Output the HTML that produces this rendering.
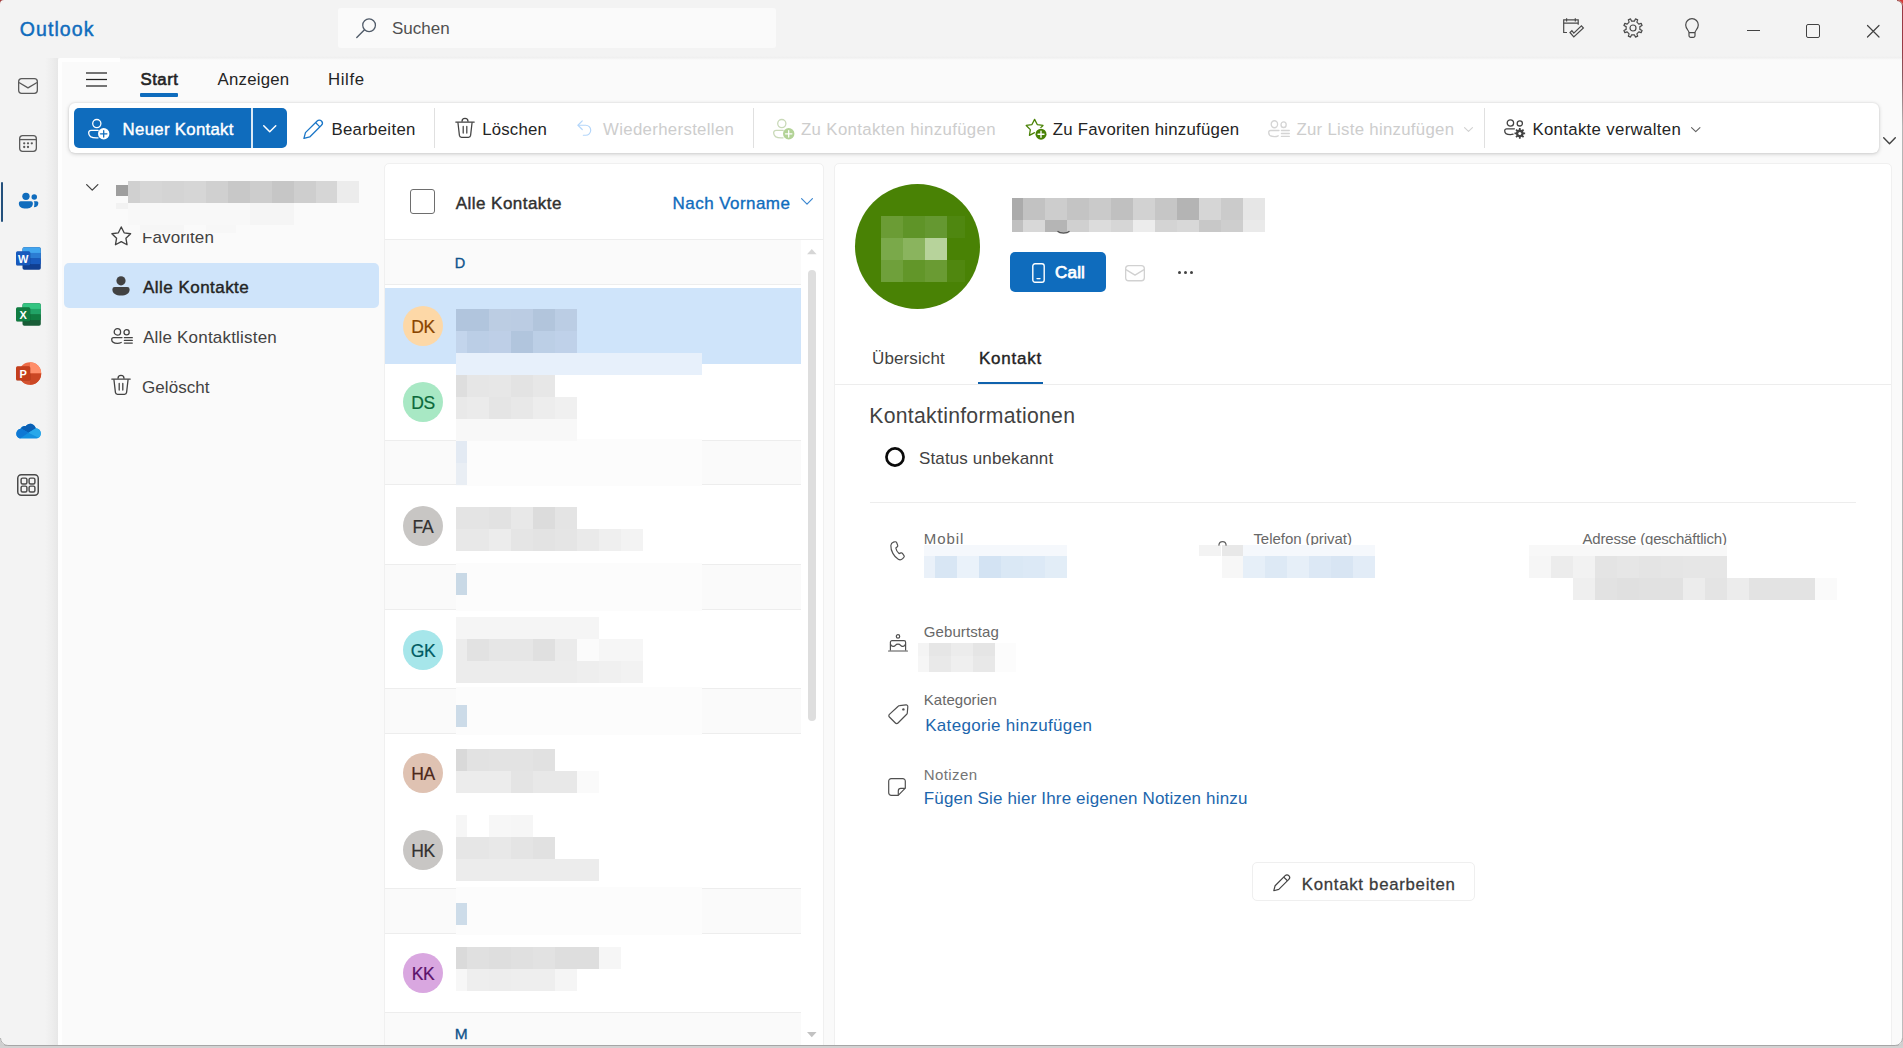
<!DOCTYPE html>
<html lang="de"><head><meta charset="utf-8"><title>Outlook</title>
<style>

*{box-sizing:border-box;margin:0;padding:0}
html,body{width:1903px;height:1048px;overflow:hidden}
body{position:relative;background:#f3f3f3;font-family:"Liberation Sans",sans-serif;color:#242424}
.t{position:absolute;white-space:nowrap;line-height:normal;display:block}
.ic{position:absolute;overflow:visible;display:block}
.m{position:absolute;display:block}
.abs{position:absolute}
#main{position:absolute;left:58px;top:57.5px;width:1845px;height:988px;background:#fafafa;border-top-left-radius:3px;border-left:4px solid #fefefe}
#mshadow{position:absolute;left:45px;top:58px;width:13px;height:987px;background:linear-gradient(to right,#f3f3f3,#eeeeee 50%,#e7e7e7)}
#search{position:absolute;left:338px;top:8px;width:438px;height:39.6px;background:#fafafa;border-radius:3px}
#ribbon{position:absolute;left:69px;top:103px;width:1810px;height:50px;background:#fff;border-radius:6px;box-shadow:0 1px 4px rgba(0,0,0,.18),0 0 2px rgba(0,0,0,.10)}
#newbtn{position:absolute;left:74px;top:108px;width:213px;height:40px;background:#0f6cbd;border-radius:5px}
#newbtn i{position:absolute;left:177px;top:0;width:1.5px;height:40px;background:#fff;opacity:.85}
.sep{position:absolute;top:108px;width:1px;height:40px;background:#e0e0e0}
#navsel{position:absolute;left:64px;top:263px;width:315px;height:45px;background:#cfe4fa;border-radius:5px}
#list{position:absolute;left:384px;top:163px;width:440px;height:890px;background:#fff;border:1px solid #f0f0f0;border-radius:5px 5px 0 0;overflow:hidden}
#detail{position:absolute;left:834px;top:163px;width:1058px;height:890px;background:#fff;border:1px solid #f0f0f0;border-radius:5px 5px 0 0}
.hd{position:absolute;left:385px;width:416px;background:#fafafa;border-top:1px solid #ededed;border-bottom:1px solid #ededed}
.av{position:absolute;width:40px;height:40px;border-radius:50%;text-align:center;font-size:17.5px;line-height:42px;letter-spacing:-0.3px;-webkit-text-stroke:0.2px currentColor}
#selrow{position:absolute;left:385px;top:288px;width:416px;height:76px;background:#cfe4fa}
#winb{position:absolute;left:0;top:1044.6px;width:1903px;height:3.4px;background:#d2d2d2;border-top:1.2px solid #a6a6a6;z-index:50}

</style></head>
<body>
<div id="mshadow"></div>
<div id="main"></div>
<i class="m" style="left:58px;top:57.5px;width:62px;height:4.5px;background:#fefefe;border-top-left-radius:3px"></i>
<i class="m" style="left:120px;top:55.5px;width:1783px;height:4px;background:linear-gradient(#f3f3f3,#efefef 45%,#f7f7f7 75%,#fafafa)"></i>
<div id="winb"></div>
<i class="m" style="left:1902px;top:6px;width:1px;height:1036px;background:linear-gradient(#9a3a44 0,#9a3a44 40px,#8a5a60 70px,#b5b5b5 120px,#bdbdbd 100%)"></i>
<svg class="ic" style="left:1897px;top:0px" width="6" height="6" viewBox="0 0 6 6" ><path d="M0 0 H6 V6 A6 6 0 0 0 0 0 Z" fill="#d63a36"/><path d="M0 0.5 A5.5 5.5 0 0 1 5.5 6" fill="none" stroke="#9a4a48" stroke-width="1"/></svg>
<svg class="ic" style="left:1895px;top:1038px;z-index:60" width="8" height="8" viewBox="0 0 8 8" ><path d="M8 0 V8 H0 A8 8 0 0 0 8 0 Z" fill="#cfcfcf"/><path d="M7.5 0 A7.5 7.5 0 0 1 0 7.5" fill="none" stroke="#b0b0b0" stroke-width="1"/></svg>
<svg class="ic" style="left:0px;top:1038px;z-index:60" width="8" height="8" viewBox="0 0 8 8" ><path d="M0 0 V8 H8 A8 8 0 0 1 0 0 Z" fill="#cfcfcf"/><path d="M0.5 0 A7.5 7.5 0 0 0 8 7.5" fill="none" stroke="#b0b0b0" stroke-width="1"/></svg>
<svg class="ic" style="left:0px;top:0px" width="4" height="4" viewBox="0 0 4 4" ><path d="M0 0 H4 A4 4 0 0 0 0 4 Z" fill="#a33a3a"/></svg>
<i class="m" style="left:1px;top:182px;width:2px;height:40px;background:#23507c;border-radius:1px"></i>
<div id="search"></div>
<svg class="ic" style="left:355.8px;top:17.8px" width="20.5" height="20.5" viewBox="0 0 21 21" ><circle cx="13.4" cy="7.4" r="6.5" fill="none" stroke="#4f5a68" stroke-width="1.3"/><path d="M8.7 12.1 L0.8 20" stroke="#4f5a68" stroke-width="1.4" stroke-linecap="round"/></svg>
<svg class="ic" style="left:1562.5px;top:18px" width="21" height="20" viewBox="0 0 21 20" ><path d="M4 14.5 H0.7 V1.9 H15.2 V6.8" fill="none" stroke="#4a4a4a" stroke-width="1.2" stroke-linejoin="miter"/><path d="M0.7 5.1 H15.2 M3.6 0.2 V3.4 M12.3 0.2 V3.4" stroke="#4a4a4a" stroke-width="1.2"/><path d="M7 14.5 L10.8 19 L20.4 10 L18.4 7.8 L10.8 15.2 L8.9 12.7 Z" fill="none" stroke="#4a4a4a" stroke-width="1.2" stroke-linejoin="miter"/></svg>
<svg class="ic" style="left:1623px;top:18px" width="20" height="20" viewBox="0 0 20 20" ><path d="M19.08 12.44 L18.14 14.69 L15.83 13.87 L13.87 15.83 L14.69 18.14 L12.44 19.08 L11.39 16.86 L8.61 16.86 L7.56 19.08 L5.31 18.14 L6.13 15.83 L4.17 13.87 L1.86 14.69 L0.92 12.44 L3.14 11.39 L3.14 8.61 L0.92 7.56 L1.86 5.31 L4.17 6.13 L6.13 4.17 L5.31 1.86 L7.56 0.92 L8.61 3.14 L11.39 3.14 L12.44 0.92 L14.69 1.86 L13.87 4.17 L15.83 6.13 L18.14 5.31 L19.08 7.56 L16.86 8.61 L16.86 11.39 Z" fill="none" stroke="#4a4a4a" stroke-width="1.2" stroke-linejoin="round"/><circle cx="10" cy="10" r="3" fill="none" stroke="#4a4a4a" stroke-width="1.2"/></svg>
<svg class="ic" style="left:1685.4px;top:18px" width="14" height="20" viewBox="0 0 14 20" ><path d="M4 14.6 C4 12.6 0.7 10.8 0.7 7 A6.3 6.3 0 0 1 13.3 7 C13.3 10.8 10 12.6 10 14.6 Z" fill="none" stroke="#4a4a4a" stroke-width="1.2" stroke-linejoin="round"/><path d="M4 14.8 V17.6 A1.8 1.8 0 0 0 5.8 19.4 H8.2 A1.8 1.8 0 0 0 10 17.6 V14.8" fill="none" stroke="#4a4a4a" stroke-width="1.2"/></svg>
<i class="m" style="left:1746.5px;top:30px;width:13.5px;height:1.3px;background:#424242"></i>
<i class="m" style="left:1806px;top:24px;width:14px;height:14px;border:1.3px solid #424242;border-radius:2px"></i>
<svg class="ic" style="left:1866.5px;top:25px" width="12.5" height="12.5" viewBox="0 0 12.5 12.5" ><path d="M0.5 0.5 L12 12 M12 0.5 L0.5 12" stroke="#424242" stroke-width="1.2" stroke-linecap="round"/></svg>
<svg class="ic" style="left:18px;top:78px" width="20" height="16" viewBox="0 0 20 16" ><rect x="0.65" y="0.65" width="18.7" height="14.7" rx="3" fill="none" stroke="#5a5a5a" stroke-width="1.3"/><path d="M0.95 4.48 L10.0 9.92 L19.05 4.48" fill="none" stroke="#5a5a5a" stroke-width="1.3" stroke-linejoin="round"/></svg>
<svg class="ic" style="left:19px;top:135px" width="18" height="17" viewBox="0 0 18 17" ><rect x="0.65" y="0.65" width="16.7" height="15.7" rx="3" fill="none" stroke="#5a5a5a" stroke-width="1.3"/><path d="M0.65 4.59 H17.35" stroke="#5a5a5a" stroke-width="1.3"/><circle cx="5.2" cy="8.3" r="1.15" fill="#5a5a5a"/><circle cx="9" cy="8.3" r="1.15" fill="#5a5a5a"/><circle cx="12.8" cy="8.3" r="1.15" fill="#5a5a5a"/><circle cx="5.2" cy="12" r="1.15" fill="#5a5a5a"/><circle cx="9" cy="12" r="1.15" fill="#5a5a5a"/></svg>
<svg class="ic" style="left:17.5px;top:192.1px" width="21.2" height="17" viewBox="0 0 22 18" ><circle cx="8.2" cy="4.6" r="3.9" fill="#0f6cbd"/><circle cx="17" cy="5.4" r="2.9" fill="#0f6cbd"/><path d="M2.6 9.8 H13.6 A1.9 1.9 0 0 1 15.5 11.7 V12.4 C15.5 15.6 12.4 17.6 8.1 17.6 C3.8 17.6 0.7 15.6 0.7 12.4 V11.7 A1.9 1.9 0 0 1 2.6 9.8 Z" fill="#0f6cbd"/><path d="M16.4 9.8 H19.6 A1.7 1.7 0 0 1 21.3 11.5 V12 C21.3 14.6 19.4 16.2 16.6 16.2 C16.9 15.2 17.1 14 17.1 12.6 V11.7 C17.1 11 16.9 10.3 16.4 9.8 Z" fill="#0f6cbd"/></svg>
<svg class="ic" style="left:16px;top:246.5px" width="25" height="23" viewBox="0 0 25 23" ><rect x="6.5" y="0.3" width="18.3" height="22.4" rx="1.8" fill="#103f91"/><path d="M8.3 0.3 H23 A1.8 1.8 0 0 1 24.8 2.1 V5.9 H6.5 V2.1 A1.8 1.8 0 0 1 8.3 0.3 Z" fill="#41a5ee"/><rect x="6.5" y="5.9" width="18.3" height="5.6" fill="#2b7cd3"/><rect x="6.5" y="11.5" width="18.3" height="5.6" fill="#185abd"/><rect x="0.2" y="4.6" width="14.2" height="14.2" rx="1.5" fill="#000" opacity=".18"/><rect x="0" y="4.3" width="14.2" height="14.2" rx="1.5" fill="#185abd"/><text x="7.1" y="15.5" text-anchor="middle" font-family="Liberation Sans, sans-serif" font-weight="700" font-size="11" fill="#fff">W</text></svg>
<svg class="ic" style="left:16px;top:303px" width="25" height="23" viewBox="0 0 25 23" ><rect x="6.5" y="0.3" width="18.3" height="22.4" rx="1.8" fill="#185c37"/><path d="M8.3 0.3 H23 A1.8 1.8 0 0 1 24.8 2.1 V5.9 H6.5 V2.1 A1.8 1.8 0 0 1 8.3 0.3 Z" fill="#33c481"/><rect x="6.5" y="5.9" width="18.3" height="5.6" fill="#21a366"/><rect x="6.5" y="11.5" width="18.3" height="5.6" fill="#107c41"/><rect x="0.2" y="4.6" width="14.2" height="14.2" rx="1.5" fill="#000" opacity=".18"/><rect x="0" y="4.3" width="14.2" height="14.2" rx="1.5" fill="#107c41"/><text x="7.1" y="15.5" text-anchor="middle" font-family="Liberation Sans, sans-serif" font-weight="700" font-size="11" fill="#fff">X</text></svg>
<svg class="ic" style="left:16px;top:361.5px" width="25" height="23" viewBox="0 0 25 23" ><circle cx="14" cy="11.5" r="11.2" fill="#ed6c47"/><path d="M14 .3 A11.2 11.2 0 0 1 25.2 11.5 H14 Z" fill="#ff8f6b"/><path d="M2.8 11.5 H25.2 A11.2 11.2 0 0 1 2.8 11.5 Z" fill="#d35230"/><path d="M14 11.5 H25.2 A11.2 11.2 0 0 1 14 22.7 Z" fill="#c43e1c" opacity=".55"/><rect x="0.2" y="4.6" width="14.2" height="14.2" rx="1.5" fill="#000" opacity=".18"/><rect x="0" y="4.3" width="14.2" height="14.2" rx="1.5" fill="#c43e1c"/><text x="7.1" y="15.5" text-anchor="middle" font-family="Liberation Sans, sans-serif" font-weight="700" font-size="11" fill="#fff">P</text></svg>
<svg class="ic" style="left:16px;top:422.7px" width="25" height="16" viewBox="0 0 25 16" ><path d="M9.6 3.2 C11.2 1 13.6 0.2 15.8 0.9 C17.9 1.6 19.3 3.2 19.8 5.3 C22.6 5.4 24.8 7.6 24.8 10.4 C24.8 13.3 22.5 15.6 19.6 15.6 H5.4 C2.5 15.6 0.3 13.4 0.3 10.7 C0.3 8.2 2.1 6.2 4.5 5.8 C5 4 7.2 2.6 9.6 3.2 Z" fill="#1490df"/><path d="M9.6 3.2 C11.2 1 13.6 0.2 15.8 0.9 C17.9 1.6 19.3 3.2 19.8 5.3 L12.5 9.8 L5 5.6 C6 3.8 7.6 2.8 9.6 3.2 Z" fill="#0a5fb4"/><path d="M5 5.6 L12.5 9.8 L4 15.4 C1.8 14.9 0.3 13 0.3 10.7 C0.3 8.2 2.1 6.2 4.5 5.8 Z" fill="#0f78d4"/><path d="M12.5 9.8 L19.8 5.3 C22.6 5.4 24.8 7.6 24.8 10.4 C24.8 12.2 23.9 13.8 22.5 14.7 Z" fill="#28a8ea"/></svg>
<svg class="ic" style="left:17.3px;top:473.5px" width="22" height="22" viewBox="0 0 22 22" ><rect x="0.75" y="0.75" width="20.5" height="20.5" rx="3.5" fill="none" stroke="#4a4a4a" stroke-width="1.5"/><rect x="4.1" y="4.1" width="5.8" height="5.8" rx="1.5" fill="none" stroke="#4a4a4a" stroke-width="1.45"/><rect x="12.1" y="4.1" width="5.8" height="5.8" rx="1.5" fill="none" stroke="#4a4a4a" stroke-width="1.45"/><rect x="4.1" y="12.1" width="5.8" height="5.8" rx="1.5" fill="none" stroke="#4a4a4a" stroke-width="1.45"/><rect x="12.1" y="12.1" width="5.8" height="5.8" rx="1.5" fill="none" stroke="#4a4a4a" stroke-width="1.45"/></svg>
<svg class="ic" style="left:86px;top:72.0px" width="21" height="15" viewBox="0 0 21 15" ><path d="M0 1 H21" stroke="#242424" stroke-width="1.25"/><path d="M0 7.5 H21" stroke="#242424" stroke-width="1.25"/><path d="M0 14 H21" stroke="#242424" stroke-width="1.25"/></svg>
<i class="m" style="left:140px;top:93.2px;width:37.9px;height:3.6px;background:#0f6cbd;border-radius:1px"></i>
<div id="ribbon"></div>
<div id="newbtn"><i></i></div>
<svg class="ic" style="left:87.8px;top:118.2px" width="22" height="22" viewBox="0 0 22 22" ><circle cx="8.8" cy="5.6" r="4.1" fill="none" stroke="#fff" stroke-width="1.3"/><path d="M10.2 12.3 H3 A2.3 2.3 0 0 0 0.7 14.6 V15 C0.7 17.9 3.6 19.9 8.3 19.9 C8.9 19.9 9.5 19.87 10 19.8" fill="none" stroke="#fff" stroke-width="1.3" stroke-linecap="round"/><circle cx="15.7" cy="15.8" r="5.7" fill="#fff"/><path d="M15.7 12.6 V19 M12.5 15.8 H18.9" stroke="#0f6cbd" stroke-width="1.3" stroke-linecap="round"/></svg>
<svg class="ic" style="left:262.5px;top:125px" width="13.5" height="7.5" viewBox="0 0 13.5 7.5" ><path d="M0.75 0.75 L6.75 6.75 L12.75 0.75" fill="none" stroke="#fff" stroke-width="1.5" stroke-linecap="round" stroke-linejoin="round"/></svg>
<svg class="ic" style="left:303.4px;top:118.6px" width="20.4" height="20.4" viewBox="0 0 20 20" ><path d="M13.9 1.9 A2.95 2.95 0 0 1 18.1 6.1 L6.6 17.6 L0.9 19.1 L2.4 13.4 Z" fill="none" stroke="#1a76c7" stroke-width="1.25" stroke-linejoin="round"/><path d="M12.3 3.5 L16.5 7.7" stroke="#1a76c7" stroke-width="1.25"/></svg>
<i class="sep" style="left:434px"></i>
<svg class="ic" style="left:455.3px;top:118px" width="20" height="20" viewBox="0 0 20 20" ><path d="M0.8 4.1 H19.2" stroke="#424242" stroke-width="1.25" stroke-linecap="round"/><path d="M7 3.8 V3.4 A3 3 0 0 1 13 3.4 V3.8" fill="none" stroke="#424242" stroke-width="1.25"/><path d="M2.9 4.3 L4.4 17.4 A2.2 2.2 0 0 0 6.6 19.3 H13.4 A2.2 2.2 0 0 0 15.6 17.4 L17.1 4.3" fill="none" stroke="#424242" stroke-width="1.25" stroke-linejoin="round"/><path d="M8.2 8.4 V15 M11.8 8.4 V15" stroke="#424242" stroke-width="1.25" stroke-linecap="round"/></svg>
<svg class="ic" style="left:577.3px;top:119.6px" width="14.5" height="16.2" viewBox="0 0 16 18" ><path d="M5.8 1 L1 5.8 L5.8 10.6" fill="none" stroke="#b4d6fa" stroke-width="1.3" stroke-linecap="round" stroke-linejoin="round"/><path d="M1.4 5.8 H9.6 A5.6 5.6 0 0 1 9.6 17 H7" fill="none" stroke="#b4d6fa" stroke-width="1.3" stroke-linecap="round"/></svg>
<i class="sep" style="left:753px"></i>
<svg class="ic" style="left:772.8px;top:118.2px" width="22" height="22" viewBox="0 0 22 22" ><circle cx="8.8" cy="5.6" r="4.1" fill="none" stroke="#c9d9b8" stroke-width="1.3"/><path d="M10.2 12.3 H3 A2.3 2.3 0 0 0 0.7 14.6 V15 C0.7 17.9 3.6 19.9 8.3 19.9 C8.9 19.9 9.5 19.87 10 19.8" fill="none" stroke="#c9d9b8" stroke-width="1.3" stroke-linecap="round"/><circle cx="15.7" cy="15.8" r="5.7" fill="#b3d397"/><path d="M15.7 12.6 V19 M12.5 15.8 H18.9" stroke="#fff" stroke-width="1.3" stroke-linecap="round"/></svg>
<svg class="ic" style="left:1024.5px;top:118px" width="22" height="22" viewBox="0 0 22 22" ><path d="M9.60 1.40 L12.25 6.56 L17.97 7.48 L13.88 11.59 L14.77 17.32 L9.60 14.70 L4.43 17.32 L5.32 11.59 L1.23 7.48 L6.95 6.56 Z" fill="none" stroke="#498205" stroke-width="1.3" stroke-linejoin="round"/><circle cx="16" cy="16.2" r="6.4" fill="#fff"/><circle cx="16" cy="16.2" r="5.5" fill="#498205"/><path d="M16 13.2 V19.2 M13 16.2 H19" stroke="#fff" stroke-width="1.4" stroke-linecap="round"/></svg>
<svg class="ic" style="left:1267.8px;top:120.4px" width="22" height="17.4" viewBox="0 0 22 16" preserveAspectRatio="none"><circle cx="6.4" cy="3.9" r="3.2" fill="none" stroke="#d4d4d4" stroke-width="1.3"/><circle cx="15.6" cy="4.3" r="2.6" fill="none" stroke="#d4d4d4" stroke-width="1.3"/><path d="M11 9.6 H2.6 A1.9 1.9 0 0 0 0.7 11.5 C0.7 13.8 2.9 15.3 6.4 15.3 C7.9 15.3 9.2 15 10.2 14.5" fill="none" stroke="#d4d4d4" stroke-width="1.3" stroke-linecap="round"/><path d="M13.4 9.7 H21.3 M13.4 12.4 H21.3 M13.4 15.1 H21.3" stroke="#d4d4d4" stroke-width="1.3" stroke-linecap="round"/></svg>
<svg class="ic" style="left:1463.7px;top:126.5px" width="9" height="5" viewBox="0 0 9 5" ><path d="M0.55 0.55 L4.5 4.45 L8.45 0.55" fill="none" stroke="#d1d1d1" stroke-width="1.1" stroke-linecap="round" stroke-linejoin="round"/></svg>
<i class="sep" style="left:1484px"></i>
<svg class="ic" style="left:1504px;top:118.5px" width="22" height="20" viewBox="0 0 22 20" ><circle cx="6.4" cy="4" r="3.2" fill="none" stroke="#424242" stroke-width="1.3"/><circle cx="15.8" cy="4.4" r="2.6" fill="none" stroke="#424242" stroke-width="1.3"/><path d="M10.4 9.8 H2.6 A1.9 1.9 0 0 0 0.7 11.7 C0.7 14 2.9 15.6 6.4 15.6 C7.4 15.6 8.3 15.5 9.1 15.2" fill="none" stroke="#424242" stroke-width="1.3" stroke-linecap="round"/><path d="M21.13 13.54 L21.13 15.26 L19.59 15.30 L19.12 16.45 L20.18 17.56 L18.96 18.78 L17.85 17.72 L16.70 18.19 L16.66 19.73 L14.94 19.73 L14.90 18.19 L13.75 17.72 L12.64 18.78 L11.42 17.56 L12.48 16.45 L12.01 15.30 L10.47 15.26 L10.47 13.54 L12.01 13.50 L12.48 12.35 L11.42 11.24 L12.64 10.02 L13.75 11.08 L14.90 10.61 L14.94 9.07 L16.66 9.07 L16.70 10.61 L17.85 11.08 L18.96 10.02 L20.18 11.24 L19.12 12.35 L19.59 13.50 Z" fill="#424242"/><circle cx="15.8" cy="14.4" r="1.5" fill="#fff"/></svg>
<svg class="ic" style="left:1690.5px;top:126.5px" width="9.5" height="5.2" viewBox="0 0 9.5 5.2" ><path d="M0.55 0.55 L4.75 4.65 L8.95 0.55" fill="none" stroke="#616161" stroke-width="1.1" stroke-linecap="round" stroke-linejoin="round"/></svg>
<svg class="ic" style="left:1882.8px;top:137px" width="13" height="7.5" viewBox="0 0 13 7.5" ><path d="M0.7 0.7 L6.5 6.8 L12.3 0.7" fill="none" stroke="#424242" stroke-width="1.4" stroke-linecap="round" stroke-linejoin="round"/></svg>
<svg class="ic" style="left:85.5px;top:184px" width="12.5" height="6.8" viewBox="0 0 12.5 6.8" ><path d="M0.65 0.65 L6.25 6.1499999999999995 L11.85 0.65" fill="none" stroke="#424242" stroke-width="1.3" stroke-linecap="round" stroke-linejoin="round"/></svg>
<i class="m" style="left:115.8px;top:184.7px;width:12.2px;height:11.0px;background:#9e9e9e;"></i>
<i class="m" style="left:128.0px;top:180.8px;width:11.8px;height:21.8px;background:#d0d0d0;"></i>
<i class="m" style="left:139.5px;top:180.8px;width:22.3px;height:21.8px;background:#d6d6d6;"></i>
<i class="m" style="left:161.5px;top:180.8px;width:22.3px;height:21.8px;background:#d4d4d4;"></i>
<i class="m" style="left:183.5px;top:180.8px;width:22.3px;height:21.8px;background:#d6d6d6;"></i>
<i class="m" style="left:205.5px;top:180.8px;width:22.3px;height:21.8px;background:#d0d0d0;"></i>
<i class="m" style="left:227.5px;top:180.8px;width:22.3px;height:21.8px;background:#c8c8c8;"></i>
<i class="m" style="left:249.5px;top:180.8px;width:22.3px;height:21.8px;background:#cdcdcd;"></i>
<i class="m" style="left:271.5px;top:180.8px;width:22.3px;height:21.8px;background:#c6c6c6;"></i>
<i class="m" style="left:293.5px;top:180.8px;width:22.3px;height:21.8px;background:#cecece;"></i>
<i class="m" style="left:315.5px;top:180.8px;width:21.8px;height:21.8px;background:#d6d6d6;"></i>
<i class="m" style="left:337.0px;top:180.8px;width:21.6px;height:21.8px;background:#ececec;"></i>
<i class="m" style="left:115.8px;top:202.6px;width:12.2px;height:6.0px;background:#f2f2f2;"></i>
<i class="m" style="left:128.0px;top:202.6px;width:162.0px;height:22.0px;background:#f8f8f8;"></i>
<i class="m" style="left:249.5px;top:202.6px;width:44.0px;height:22.0px;background:#f5f5f5;"></i>
<svg class="ic" style="left:111px;top:225.6px" width="20.5" height="20.5" viewBox="0 0 20 20" ><path d="M10.00 0.90 L12.82 6.62 L19.13 7.53 L14.57 11.98 L15.64 18.27 L10.00 15.30 L4.36 18.27 L5.43 11.98 L0.87 7.53 L7.18 6.62 Z" fill="none" stroke="#424242" stroke-width="1.3" stroke-linejoin="round"/></svg>
<div id="navsel"></div>
<svg class="ic" style="left:112.1px;top:276.4px" width="18" height="20" viewBox="0 0 18 20" ><circle cx="9" cy="4.8" r="4.6" fill="#424242"/><path d="M2.6 11 H15.4 A2.2 2.2 0 0 1 17.6 13.2 V13.8 C17.6 17.4 13.9 19.6 9 19.6 C4.1 19.6 0.4 17.4 0.4 13.8 V13.2 A2.2 2.2 0 0 1 2.6 11 Z" fill="#424242"/></svg>
<svg class="ic" style="left:110.5px;top:328.4px" width="22" height="16" viewBox="0 0 22 16" preserveAspectRatio="none"><circle cx="6.4" cy="3.9" r="3.2" fill="none" stroke="#424242" stroke-width="1.3"/><circle cx="15.6" cy="4.3" r="2.6" fill="none" stroke="#424242" stroke-width="1.3"/><path d="M11 9.6 H2.6 A1.9 1.9 0 0 0 0.7 11.5 C0.7 13.8 2.9 15.3 6.4 15.3 C7.9 15.3 9.2 15 10.2 14.5" fill="none" stroke="#424242" stroke-width="1.3" stroke-linecap="round"/><path d="M13.4 9.7 H21.3 M13.4 12.4 H21.3 M13.4 15.1 H21.3" stroke="#424242" stroke-width="1.3" stroke-linecap="round"/></svg>
<svg class="ic" style="left:111.2px;top:375.4px" width="20" height="20" viewBox="0 0 20 20" ><path d="M0.8 4.1 H19.2" stroke="#424242" stroke-width="1.3" stroke-linecap="round"/><path d="M7 3.8 V3.4 A3 3 0 0 1 13 3.4 V3.8" fill="none" stroke="#424242" stroke-width="1.3"/><path d="M2.9 4.3 L4.4 17.4 A2.2 2.2 0 0 0 6.6 19.3 H13.4 A2.2 2.2 0 0 0 15.6 17.4 L17.1 4.3" fill="none" stroke="#424242" stroke-width="1.3" stroke-linejoin="round"/><path d="M8.2 8.4 V15 M11.8 8.4 V15" stroke="#424242" stroke-width="1.3" stroke-linecap="round"/></svg>
<div id="list"></div>
<i class="m" style="left:410px;top:189.3px;width:24.8px;height:24.6px;border:1px solid #6e6e6e;border-radius:3px;background:#fff"></i>
<svg class="ic" style="left:800.5px;top:198.3px" width="12" height="6.8" viewBox="0 0 12 6.8" ><path d="M0.575 0.575 L6.0 6.225 L11.425 0.575" fill="none" stroke="#3a86d0" stroke-width="1.15" stroke-linecap="round" stroke-linejoin="round"/></svg>
<i class="m" style="left:385px;top:239px;width:438px;height:1px;background:#ededed"></i>
<div class="hd" style="top:239px;height:46.30000000000001px"></div>
<div class="hd" style="top:439.5px;height:45.80000000000001px"></div>
<div class="hd" style="top:564px;height:45.60000000000002px"></div>
<div class="hd" style="top:688px;height:45.5px"></div>
<div class="hd" style="top:888.3px;height:45.40000000000009px"></div>
<div class="hd" style="top:1011.5px;height:34.5px"></div>
<div id="selrow"></div>
<i class="m" style="left:801px;top:240px;width:22px;height:806px;background:#fff"></i>
<i class="m" style="left:808px;top:269.5px;width:8.4px;height:451px;background:#dedede;border-radius:4.2px"></i>
<svg class="ic" style="left:807px;top:248.6px" width="9.6" height="5.2" viewBox="0 0 9.6 5.2" ><path d="M0 5.2 L4.8 0 L9.6 5.2 Z" fill="#d6d6d6"/></svg>
<svg class="ic" style="left:807px;top:1032px" width="9.6" height="5.2" viewBox="0 0 9.6 5.2" ><path d="M0 0 L4.8 5.2 L9.6 0 Z" fill="#c2c2c2"/></svg>
<i class="m" style="left:456.0px;top:438.5px;width:245.8px;height:47.8px;background:#fcfcfc;"></i>
<i class="m" style="left:456.0px;top:563.0px;width:245.8px;height:47.6px;background:#fcfcfc;"></i>
<i class="m" style="left:456.0px;top:687.0px;width:245.8px;height:47.5px;background:#fcfcfc;"></i>
<i class="m" style="left:456.0px;top:887.3px;width:245.8px;height:47.4px;background:#fcfcfc;"></i>
<div class="av" id="a_dk" style="left:403px;top:306px;background:#fdd8a7;color:#8a4500">DK</div>
<div class="av" id="a_ds" style="left:403px;top:382px;background:#a8e8c4;color:#0b6a3a">DS</div>
<div class="av" id="a_fa" style="left:403px;top:506px;background:#c8c6c4;color:#323130">FA</div>
<div class="av" id="a_gk" style="left:403px;top:629.5px;background:#a6e6ea;color:#005b62">GK</div>
<div class="av" id="a_ha" style="left:403px;top:753px;background:#dfc2b2;color:#4d291c">HA</div>
<div class="av" id="a_hk" style="left:403px;top:829.5px;background:#c8c6c4;color:#323130">HK</div>
<div class="av" id="a_kk" style="left:403px;top:953px;background:#d9a7e0;color:#5c126b">KK</div>
<i class="m" style="left:456.0px;top:308.8px;width:10.9px;height:22.2px;background:#b1c5dd;"></i>
<i class="m" style="left:466.6px;top:308.8px;width:22.3px;height:22.2px;background:#b1c5dd;"></i>
<i class="m" style="left:488.6px;top:308.8px;width:22.3px;height:22.2px;background:#bccde3;"></i>
<i class="m" style="left:510.6px;top:308.8px;width:22.3px;height:22.2px;background:#bbcce3;"></i>
<i class="m" style="left:532.6px;top:308.8px;width:22.3px;height:22.2px;background:#b2c5dc;"></i>
<i class="m" style="left:554.6px;top:308.8px;width:22.3px;height:22.2px;background:#bbcde4;"></i>
<i class="m" style="left:456.0px;top:330.8px;width:10.9px;height:22.2px;background:#c3d5ec;"></i>
<i class="m" style="left:466.6px;top:330.8px;width:22.3px;height:22.2px;background:#bbcee6;"></i>
<i class="m" style="left:488.6px;top:330.8px;width:22.3px;height:22.2px;background:#becfe7;"></i>
<i class="m" style="left:510.6px;top:330.8px;width:22.3px;height:22.2px;background:#b1c5dd;"></i>
<i class="m" style="left:532.6px;top:330.8px;width:22.3px;height:22.2px;background:#bccfe6;"></i>
<i class="m" style="left:554.6px;top:330.8px;width:22.3px;height:22.2px;background:#bfd1e9;"></i>
<i class="m" style="left:456.0px;top:352.8px;width:245.8px;height:22.2px;background:#e7f0fb;"></i>
<i class="m" style="left:456.0px;top:374.8px;width:10.9px;height:22.2px;background:#dedede;"></i>
<i class="m" style="left:466.6px;top:374.8px;width:22.3px;height:22.2px;background:#e6e6e6;"></i>
<i class="m" style="left:488.6px;top:374.8px;width:22.3px;height:22.2px;background:#e7e7e7;"></i>
<i class="m" style="left:510.6px;top:374.8px;width:22.3px;height:22.2px;background:#e3e3e3;"></i>
<i class="m" style="left:532.6px;top:374.8px;width:22.3px;height:22.2px;background:#e7e7e7;"></i>
<i class="m" style="left:456.0px;top:396.8px;width:10.9px;height:22.2px;background:#e9e9e9;"></i>
<i class="m" style="left:466.6px;top:396.8px;width:22.3px;height:22.2px;background:#ebebeb;"></i>
<i class="m" style="left:488.6px;top:396.8px;width:22.3px;height:22.2px;background:#e5e5e5;"></i>
<i class="m" style="left:510.6px;top:396.8px;width:22.3px;height:22.2px;background:#e8e8e8;"></i>
<i class="m" style="left:532.6px;top:396.8px;width:22.3px;height:22.2px;background:#ededed;"></i>
<i class="m" style="left:554.6px;top:396.8px;width:22.3px;height:22.2px;background:#f0f0f0;"></i>
<i class="m" style="left:456.0px;top:418.8px;width:10.9px;height:22.2px;background:#f8f8f8;"></i>
<i class="m" style="left:466.6px;top:418.8px;width:22.3px;height:22.2px;background:#f8f8f8;"></i>
<i class="m" style="left:488.6px;top:418.8px;width:22.3px;height:22.2px;background:#f8f8f8;"></i>
<i class="m" style="left:510.6px;top:418.8px;width:22.3px;height:22.2px;background:#f8f8f8;"></i>
<i class="m" style="left:532.6px;top:418.8px;width:22.3px;height:22.2px;background:#f8f8f8;"></i>
<i class="m" style="left:554.6px;top:418.8px;width:22.3px;height:22.2px;background:#f8f8f8;"></i>
<i class="m" style="left:456.0px;top:440.8px;width:10.9px;height:22.2px;background:#e3eaf3;"></i>
<i class="m" style="left:456.0px;top:462.8px;width:10.9px;height:22.2px;background:#e9eef4;"></i>
<i class="m" style="left:456.0px;top:506.8px;width:10.9px;height:22.2px;background:#e4e4e4;"></i>
<i class="m" style="left:466.6px;top:506.8px;width:22.3px;height:22.2px;background:#e4e4e4;"></i>
<i class="m" style="left:488.6px;top:506.8px;width:22.3px;height:22.2px;background:#e2e2e2;"></i>
<i class="m" style="left:510.6px;top:506.8px;width:22.3px;height:22.2px;background:#e8e8e8;"></i>
<i class="m" style="left:532.6px;top:506.8px;width:22.3px;height:22.2px;background:#dcdcdc;"></i>
<i class="m" style="left:554.6px;top:506.8px;width:22.3px;height:22.2px;background:#e4e4e4;"></i>
<i class="m" style="left:456.0px;top:528.8px;width:10.9px;height:22.2px;background:#e8e8e8;"></i>
<i class="m" style="left:466.6px;top:528.8px;width:22.3px;height:22.2px;background:#e8e8e8;"></i>
<i class="m" style="left:488.6px;top:528.8px;width:22.3px;height:22.2px;background:#ececec;"></i>
<i class="m" style="left:510.6px;top:528.8px;width:22.3px;height:22.2px;background:#e5e5e5;"></i>
<i class="m" style="left:532.6px;top:528.8px;width:22.3px;height:22.2px;background:#e3e3e3;"></i>
<i class="m" style="left:554.6px;top:528.8px;width:22.3px;height:22.2px;background:#e5e5e5;"></i>
<i class="m" style="left:576.6px;top:528.8px;width:22.3px;height:22.2px;background:#eaeaea;"></i>
<i class="m" style="left:598.6px;top:528.8px;width:22.3px;height:22.2px;background:#efefef;"></i>
<i class="m" style="left:620.6px;top:528.8px;width:22.3px;height:22.2px;background:#f3f3f3;"></i>
<i class="m" style="left:456.0px;top:572.8px;width:10.9px;height:22.2px;background:#c9d9e6;"></i>
<i class="m" style="left:456.0px;top:616.8px;width:10.9px;height:22.2px;background:#f5f5f5;"></i>
<i class="m" style="left:466.6px;top:616.8px;width:22.3px;height:22.2px;background:#f5f5f5;"></i>
<i class="m" style="left:488.6px;top:616.8px;width:22.3px;height:22.2px;background:#f5f5f5;"></i>
<i class="m" style="left:510.6px;top:616.8px;width:22.3px;height:22.2px;background:#f5f5f5;"></i>
<i class="m" style="left:532.6px;top:616.8px;width:22.3px;height:22.2px;background:#f5f5f5;"></i>
<i class="m" style="left:554.6px;top:616.8px;width:22.3px;height:22.2px;background:#f5f5f5;"></i>
<i class="m" style="left:576.6px;top:616.8px;width:22.3px;height:22.2px;background:#f5f5f5;"></i>
<i class="m" style="left:456.0px;top:638.8px;width:10.9px;height:22.2px;background:#ececec;"></i>
<i class="m" style="left:466.6px;top:638.8px;width:22.3px;height:22.2px;background:#e2e2e2;"></i>
<i class="m" style="left:488.6px;top:638.8px;width:22.3px;height:22.2px;background:#e6e6e6;"></i>
<i class="m" style="left:510.6px;top:638.8px;width:22.3px;height:22.2px;background:#e6e6e6;"></i>
<i class="m" style="left:532.6px;top:638.8px;width:22.3px;height:22.2px;background:#e0e0e0;"></i>
<i class="m" style="left:554.6px;top:638.8px;width:22.3px;height:22.2px;background:#ebebeb;"></i>
<i class="m" style="left:576.6px;top:638.8px;width:22.3px;height:22.2px;background:#fbfbfb;"></i>
<i class="m" style="left:598.6px;top:638.8px;width:22.3px;height:22.2px;background:#f6f6f6;"></i>
<i class="m" style="left:620.6px;top:638.8px;width:22.3px;height:22.2px;background:#f6f6f6;"></i>
<i class="m" style="left:456.0px;top:660.8px;width:10.9px;height:22.2px;background:#ececec;"></i>
<i class="m" style="left:466.6px;top:660.8px;width:22.3px;height:22.2px;background:#ececec;"></i>
<i class="m" style="left:488.6px;top:660.8px;width:22.3px;height:22.2px;background:#ececec;"></i>
<i class="m" style="left:510.6px;top:660.8px;width:22.3px;height:22.2px;background:#ececec;"></i>
<i class="m" style="left:532.6px;top:660.8px;width:22.3px;height:22.2px;background:#ececec;"></i>
<i class="m" style="left:554.6px;top:660.8px;width:22.3px;height:22.2px;background:#ececec;"></i>
<i class="m" style="left:576.6px;top:660.8px;width:22.3px;height:22.2px;background:#eeeeee;"></i>
<i class="m" style="left:598.6px;top:660.8px;width:22.3px;height:22.2px;background:#f0f0f0;"></i>
<i class="m" style="left:620.6px;top:660.8px;width:22.3px;height:22.2px;background:#f2f2f2;"></i>
<i class="m" style="left:456.0px;top:704.8px;width:10.9px;height:22.2px;background:#ccdbe8;"></i>
<i class="m" style="left:456.0px;top:748.8px;width:10.9px;height:22.2px;background:#d9d9d9;"></i>
<i class="m" style="left:466.6px;top:748.8px;width:22.3px;height:22.2px;background:#e2e2e2;"></i>
<i class="m" style="left:488.6px;top:748.8px;width:22.3px;height:22.2px;background:#e3e3e3;"></i>
<i class="m" style="left:510.6px;top:748.8px;width:22.3px;height:22.2px;background:#e3e3e3;"></i>
<i class="m" style="left:532.6px;top:748.8px;width:22.3px;height:22.2px;background:#e1e1e1;"></i>
<i class="m" style="left:456.0px;top:770.8px;width:10.9px;height:22.2px;background:#ececec;"></i>
<i class="m" style="left:466.6px;top:770.8px;width:22.3px;height:22.2px;background:#ececec;"></i>
<i class="m" style="left:488.6px;top:770.8px;width:22.3px;height:22.2px;background:#ececec;"></i>
<i class="m" style="left:510.6px;top:770.8px;width:22.3px;height:22.2px;background:#e4e4e4;"></i>
<i class="m" style="left:532.6px;top:770.8px;width:22.3px;height:22.2px;background:#e8e8e8;"></i>
<i class="m" style="left:554.6px;top:770.8px;width:22.3px;height:22.2px;background:#e8e8e8;"></i>
<i class="m" style="left:576.6px;top:770.8px;width:22.3px;height:22.2px;background:#fafafa;"></i>
<i class="m" style="left:456.0px;top:814.8px;width:10.9px;height:22.2px;background:#f6f6f6;"></i>
<i class="m" style="left:488.6px;top:814.8px;width:22.3px;height:22.2px;background:#f7f7f7;"></i>
<i class="m" style="left:510.6px;top:814.8px;width:22.3px;height:22.2px;background:#f6f6f6;"></i>
<i class="m" style="left:456.0px;top:836.8px;width:10.9px;height:22.2px;background:#e6e6e6;"></i>
<i class="m" style="left:466.6px;top:836.8px;width:22.3px;height:22.2px;background:#e6e6e6;"></i>
<i class="m" style="left:488.6px;top:836.8px;width:22.3px;height:22.2px;background:#e8e8e8;"></i>
<i class="m" style="left:510.6px;top:836.8px;width:22.3px;height:22.2px;background:#e4e4e4;"></i>
<i class="m" style="left:532.6px;top:836.8px;width:22.3px;height:22.2px;background:#e1e1e1;"></i>
<i class="m" style="left:456.0px;top:858.8px;width:10.9px;height:22.2px;background:#ececec;"></i>
<i class="m" style="left:466.6px;top:858.8px;width:22.3px;height:22.2px;background:#ececec;"></i>
<i class="m" style="left:488.6px;top:858.8px;width:22.3px;height:22.2px;background:#ececec;"></i>
<i class="m" style="left:510.6px;top:858.8px;width:22.3px;height:22.2px;background:#ececec;"></i>
<i class="m" style="left:532.6px;top:858.8px;width:22.3px;height:22.2px;background:#ececec;"></i>
<i class="m" style="left:554.6px;top:858.8px;width:22.3px;height:22.2px;background:#ececec;"></i>
<i class="m" style="left:576.6px;top:858.8px;width:22.3px;height:22.2px;background:#ececec;"></i>
<i class="m" style="left:456.0px;top:902.8px;width:10.9px;height:22.2px;background:#cddce9;"></i>
<i class="m" style="left:456.0px;top:946.8px;width:10.9px;height:22.2px;background:#dadada;"></i>
<i class="m" style="left:466.6px;top:946.8px;width:22.3px;height:22.2px;background:#e0e0e0;"></i>
<i class="m" style="left:488.6px;top:946.8px;width:22.3px;height:22.2px;background:#dedede;"></i>
<i class="m" style="left:510.6px;top:946.8px;width:22.3px;height:22.2px;background:#e0e0e0;"></i>
<i class="m" style="left:532.6px;top:946.8px;width:22.3px;height:22.2px;background:#e2e2e2;"></i>
<i class="m" style="left:554.6px;top:946.8px;width:22.3px;height:22.2px;background:#dedede;"></i>
<i class="m" style="left:576.6px;top:946.8px;width:22.3px;height:22.2px;background:#dedede;"></i>
<i class="m" style="left:598.6px;top:946.8px;width:22.3px;height:22.2px;background:#f6f6f6;"></i>
<i class="m" style="left:456.0px;top:968.8px;width:10.9px;height:22.2px;background:#f7f7f7;"></i>
<i class="m" style="left:466.6px;top:968.8px;width:22.3px;height:22.2px;background:#eeeeee;"></i>
<i class="m" style="left:488.6px;top:968.8px;width:22.3px;height:22.2px;background:#ededed;"></i>
<i class="m" style="left:510.6px;top:968.8px;width:22.3px;height:22.2px;background:#eeeeee;"></i>
<i class="m" style="left:532.6px;top:968.8px;width:22.3px;height:22.2px;background:#eeeeee;"></i>
<i class="m" style="left:554.6px;top:968.8px;width:22.3px;height:22.2px;background:#f5f5f5;"></i>
<div id="detail"></div>
<i class="m" style="left:855px;top:183.8px;width:125.2px;height:125.2px;border-radius:50%;background:#498205"></i>
<i class="m" style="left:881.0px;top:216.0px;width:22.2px;height:22.2px;background:#6b9c35;"></i>
<i class="m" style="left:903.0px;top:216.0px;width:22.2px;height:22.2px;background:#5f9428;"></i>
<i class="m" style="left:925.0px;top:216.0px;width:22.2px;height:22.2px;background:#659831;"></i>
<i class="m" style="left:947.0px;top:216.0px;width:17.5px;height:22.2px;background:#4f8710;"></i>
<i class="m" style="left:881.0px;top:238.0px;width:22.2px;height:22.2px;background:#7aa94a;"></i>
<i class="m" style="left:903.0px;top:238.0px;width:22.2px;height:22.2px;background:#8ab45e;"></i>
<i class="m" style="left:925.0px;top:238.0px;width:22.2px;height:22.2px;background:#b7d39b;"></i>
<i class="m" style="left:881.0px;top:260.0px;width:22.2px;height:22.2px;background:#6fa03b;"></i>
<i class="m" style="left:903.0px;top:260.0px;width:22.2px;height:22.2px;background:#629629;"></i>
<i class="m" style="left:925.0px;top:260.0px;width:22.2px;height:22.2px;background:#6a9b33;"></i>
<i class="m" style="left:947.0px;top:260.0px;width:17.5px;height:22.2px;background:#50870f;"></i>
<i class="m" style="left:1011.9px;top:197.8px;width:11.4px;height:22.0px;background:#ababab;"></i>
<i class="m" style="left:1011.9px;top:219.6px;width:11.4px;height:12.0px;background:#c0c0c0;"></i>
<i class="m" style="left:1023.0px;top:197.8px;width:22.3px;height:22.0px;background:#c2c2c2;"></i>
<i class="m" style="left:1023.0px;top:219.6px;width:22.3px;height:12.0px;background:#d8d8d8;"></i>
<i class="m" style="left:1045.0px;top:197.8px;width:22.3px;height:22.0px;background:#cdcdcd;"></i>
<i class="m" style="left:1045.0px;top:219.6px;width:22.3px;height:12.0px;background:#b5b5b5;"></i>
<i class="m" style="left:1067.0px;top:197.8px;width:22.3px;height:22.0px;background:#c4c4c4;"></i>
<i class="m" style="left:1067.0px;top:219.6px;width:22.3px;height:12.0px;background:#d0d0d0;"></i>
<i class="m" style="left:1089.0px;top:197.8px;width:22.3px;height:22.0px;background:#cacaca;"></i>
<i class="m" style="left:1089.0px;top:219.6px;width:22.3px;height:12.0px;background:#dcdcdc;"></i>
<i class="m" style="left:1111.0px;top:197.8px;width:22.3px;height:22.0px;background:#c0c0c0;"></i>
<i class="m" style="left:1111.0px;top:219.6px;width:22.3px;height:12.0px;background:#d6d6d6;"></i>
<i class="m" style="left:1133.0px;top:197.8px;width:22.3px;height:22.0px;background:#d2d2d2;"></i>
<i class="m" style="left:1133.0px;top:219.6px;width:22.3px;height:12.0px;background:#ececec;"></i>
<i class="m" style="left:1155.0px;top:197.8px;width:22.3px;height:22.0px;background:#c6c6c6;"></i>
<i class="m" style="left:1155.0px;top:219.6px;width:22.3px;height:12.0px;background:#d4d4d4;"></i>
<i class="m" style="left:1177.0px;top:197.8px;width:22.3px;height:22.0px;background:#b4b4b4;"></i>
<i class="m" style="left:1177.0px;top:219.6px;width:22.3px;height:12.0px;background:#d8d8d8;"></i>
<i class="m" style="left:1199.0px;top:197.8px;width:22.3px;height:22.0px;background:#d6d6d6;"></i>
<i class="m" style="left:1199.0px;top:219.6px;width:22.3px;height:12.0px;background:#c8c8c8;"></i>
<i class="m" style="left:1221.0px;top:197.8px;width:22.3px;height:22.0px;background:#cbcbcb;"></i>
<i class="m" style="left:1221.0px;top:219.6px;width:22.3px;height:12.0px;background:#cecece;"></i>
<i class="m" style="left:1243.0px;top:197.8px;width:22.3px;height:22.0px;background:#e6e6e6;"></i>
<i class="m" style="left:1243.0px;top:219.6px;width:22.3px;height:12.0px;background:#eaeaea;"></i>
<svg class="ic" style="left:1057px;top:231.2px" width="13" height="3" viewBox="0 0 13 3" ><path d="M0.5 0.2 C3 2.6 10 2.6 12.5 0.2" fill="none" stroke="#555" stroke-width="1.3"/></svg>
<i class="m" style="left:1010px;top:252.2px;width:96px;height:39.6px;background:#0f6cbd;border-radius:5px"></i>
<svg class="ic" style="left:1032.2px;top:262.5px" width="13" height="20" viewBox="0 0 13 20" ><rect x="0.8" y="0.8" width="11.4" height="18.4" rx="2.2" fill="none" stroke="#fff" stroke-width="1.4"/><path d="M5 15.6 H8" stroke="#fff" stroke-width="1.4" stroke-linecap="round"/></svg>
<svg class="ic" style="left:1124.5px;top:265px" width="20" height="16.4" viewBox="0 0 20 16.4" ><rect x="0.65" y="0.65" width="18.7" height="15.099999999999998" rx="3" fill="none" stroke="#d1d1d1" stroke-width="1.3"/><path d="M0.95 4.592 L10.0 10.168 L19.05 4.592" fill="none" stroke="#d1d1d1" stroke-width="1.3" stroke-linejoin="round"/></svg>
<i class="m" style="left:1177.7px;top:270.8px;width:3px;height:3px;border-radius:50%;background:#424242"></i>
<i class="m" style="left:1184.0px;top:270.8px;width:3px;height:3px;border-radius:50%;background:#424242"></i>
<i class="m" style="left:1190.3px;top:270.8px;width:3px;height:3px;border-radius:50%;background:#424242"></i>
<i class="m" style="left:835px;top:384px;width:1056px;height:1px;background:#ededed"></i>
<i class="m" style="left:978px;top:382.2px;width:65px;height:2px;background:#0f62ad"></i>
<svg class="ic" style="left:885.2px;top:447.2px" width="20" height="20" viewBox="0 0 20 20" ><circle cx="10" cy="10" r="8.55" fill="none" stroke="#0a0a0a" stroke-width="2.7"/></svg>
<i class="m" style="left:870px;top:501.5px;width:986px;height:1px;background:#ededed"></i>
<svg class="ic" style="left:889px;top:541px" width="15.6" height="19.5" viewBox="0 0 16 20" ><path d="M4.6 1.2 L6.2 0.8 A1.4 1.4 0 0 1 7.8 1.6 L8.9 4.3 A1.4 1.4 0 0 1 8.5 5.9 L7 7.1 C7.3 9.3 8.6 11.6 10.3 12.9 L12.2 12.2 A1.4 1.4 0 0 1 13.8 12.7 L15.4 15 A1.4 1.4 0 0 1 15.2 16.8 L14 18 C12.8 19.2 11 19.6 9.5 18.7 C5.2 16.2 1.6 9.8 1.9 4.6 C2 3 3.1 1.7 4.6 1.2 Z" fill="none" stroke="#505050" stroke-width="1.2" stroke-linejoin="round"/></svg>
<svg class="ic" style="left:887.6px;top:634px" width="20" height="18" viewBox="0 0 20 18" ><circle cx="10" cy="2.4" r="1.7" fill="none" stroke="#505050" stroke-width="1.2"/><path d="M2.4 16.6 V8.2 A1.6 1.6 0 0 1 4 6.6 H16 A1.6 1.6 0 0 1 17.6 8.2 V16.6" fill="none" stroke="#505050" stroke-width="1.2"/><path d="M0.6 17 H19.4" stroke="#505050" stroke-width="1.2" stroke-linecap="round"/><path d="M2.4 10 C3.6 13 6.2 13 7.4 11.4 C8.6 9.8 11.4 9.8 12.6 11.4 C13.8 13 16.4 13 17.6 10" fill="none" stroke="#505050" stroke-width="1.2"/></svg>
<svg class="ic" style="left:887.6px;top:704.3px" width="21" height="20" viewBox="0 0 21 20" ><path d="M11.6 1.6 L18 0.9 A1.6 1.6 0 0 1 19.8 2.6 L19.3 9 A2 2 0 0 1 18.7 10.3 L10 19 A1.8 1.8 0 0 1 7.4 19 L1.4 13 A1.8 1.8 0 0 1 1.4 10.4 L10.2 2.2 A2 2 0 0 1 11.6 1.6 Z" fill="none" stroke="#505050" stroke-width="1.2" stroke-linejoin="round"/><circle cx="15.4" cy="5.4" r="1.2" fill="#505050"/></svg>
<svg class="ic" style="left:888.3px;top:778.3px" width="18" height="18" viewBox="0 0 18 18" ><path d="M3.2 0.7 H14.8 A2.5 2.5 0 0 1 17.3 3.2 V10.2 L10.2 17.3 H3.2 A2.5 2.5 0 0 1 0.7 14.8 V3.2 A2.5 2.5 0 0 1 3.2 0.7 Z" fill="none" stroke="#505050" stroke-width="1.2" stroke-linejoin="round"/><path d="M17.2 10.4 H12.8 A2.5 2.5 0 0 0 10.3 12.9 V17.2" fill="none" stroke="#505050" stroke-width="1.2"/></svg>
<i class="m" style="left:1252px;top:862.4px;width:222.5px;height:39px;border:1px solid #efefef;border-radius:5px;background:#fff"></i>
<svg class="ic" style="left:1273px;top:873.5px" width="17.5" height="17.5" viewBox="0 0 20 20" ><path d="M13.9 1.9 A2.95 2.95 0 0 1 18.1 6.1 L6.6 17.6 L0.9 19.1 L2.4 13.4 Z" fill="none" stroke="#424242" stroke-width="1.35" stroke-linejoin="round"/><path d="M12.3 3.5 L16.5 7.7" stroke="#424242" stroke-width="1.35"/></svg>
<span id="t_outlook" class="t" style="left:19.8px;top:18.2px;font-size:19.5px;-webkit-text-stroke:0.45px #0f6cbd;color:#0f6cbd;letter-spacing:1.066px">Outlook</span>
<span id="t_suchen" class="t" style="left:392.0px;top:18.6px;font-size:17px;color:#505050;letter-spacing:0.000px">Suchen</span>
<span id="t_start" class="t" style="left:140.6px;top:69.8px;font-size:16.8px;-webkit-text-stroke:0.6px #242424;color:#242424;letter-spacing:0.450px">Start</span>
<span id="t_anz" class="t" style="left:217.6px;top:69.8px;font-size:16.8px;color:#242424;letter-spacing:0.228px">Anzeigen</span>
<span id="t_hilfe" class="t" style="left:328.0px;top:69.8px;font-size:16.8px;color:#242424;letter-spacing:0.600px">Hilfe</span>
<span id="t_neu" class="t" style="left:122.6px;top:119.8px;font-size:16.8px;-webkit-text-stroke:0.42px #ffffff;color:#ffffff;letter-spacing:0.300px">Neuer Kontakt</span>
<span id="t_bearb" class="t" style="left:331.4px;top:119.9px;font-size:16.8px;color:#242424;letter-spacing:0.311px">Bearbeiten</span>
<span id="t_losch" class="t" style="left:482.3px;top:119.9px;font-size:16.8px;color:#242424;letter-spacing:0.167px">Löschen</span>
<span id="t_wieder" class="t" style="left:603.0px;top:119.9px;font-size:16.8px;color:#cdcdcd;letter-spacing:0.333px">Wiederherstellen</span>
<span id="t_zukont" class="t" style="left:801.0px;top:119.9px;font-size:16.8px;color:#cdcdcd;letter-spacing:0.364px">Zu Kontakten hinzufügen</span>
<span id="t_zufav" class="t" style="left:1052.7px;top:119.9px;font-size:16.8px;color:#242424;letter-spacing:0.245px">Zu Favoriten hinzufügen</span>
<span id="t_zurliste" class="t" style="left:1296.4px;top:119.9px;font-size:16.8px;color:#cdcdcd;letter-spacing:0.294px">Zur Liste hinzufügen</span>
<span id="t_verw" class="t" style="left:1532.4px;top:119.9px;font-size:16.8px;color:#242424;letter-spacing:0.330px">Kontakte verwalten</span>
<span id="t_fav" class="t" style="left:142.0px;top:228.0px;font-size:17px;color:#424242;letter-spacing:0.125px">Favoriten</span>
<span id="t_allek" class="t" style="left:143.0px;top:277.6px;font-size:17px;-webkit-text-stroke:0.42px #242424;color:#242424;letter-spacing:0.466px">Alle Kontakte</span>
<span id="t_listen" class="t" style="left:143.0px;top:327.6px;font-size:17px;color:#424242;letter-spacing:0.200px">Alle Kontaktlisten</span>
<span id="t_gel" class="t" style="left:142.0px;top:377.6px;font-size:17px;color:#424242;letter-spacing:0.058px">Gelöscht</span>
<span id="t_hdr" class="t" style="left:455.7px;top:193.6px;font-size:17px;-webkit-text-stroke:0.42px #303030;color:#303030;letter-spacing:0.467px">Alle Kontakte</span>
<span id="t_sort" class="t" style="left:672.6px;top:193.6px;font-size:17px;-webkit-text-stroke:0.36px #0f6cbd;color:#0f6cbd;letter-spacing:0.436px">Nach Vorname</span>
<span id="t_D" class="t" style="left:454.7px;top:254.6px;font-size:14.5px;-webkit-text-stroke:0.35px #0f548c;color:#0f548c;letter-spacing:0.000px">D</span>
<span id="t_M" class="t" style="left:454.7px;top:1024.8px;font-size:15.5px;-webkit-text-stroke:0.35px #0f548c;color:#0f548c;letter-spacing:0.000px">M</span>
<span id="t_call" class="t" style="left:1055.0px;top:263.1px;font-size:17px;-webkit-text-stroke:0.75px #ffffff;color:#ffffff;letter-spacing:0.200px">Call</span>
<span id="t_ueber" class="t" style="left:872.0px;top:349.1px;font-size:17px;color:#424242;letter-spacing:0.125px">Übersicht</span>
<span id="t_kontakt" class="t" style="left:979.0px;top:349.1px;font-size:17px;-webkit-text-stroke:0.4px #242424;color:#242424;letter-spacing:0.767px">Kontakt</span>
<span id="t_kinfo" class="t" style="left:869.3px;top:404.2px;font-size:21.2px;color:#424242;letter-spacing:0.284px">Kontaktinformationen</span>
<span id="t_status" class="t" style="left:919.0px;top:448.6px;font-size:17px;color:#424242;letter-spacing:0.120px">Status unbekannt</span>
<span id="t_mobil" class="t" style="left:923.8px;top:530.4px;font-size:15px;color:#686868;letter-spacing:0.900px">Mobil</span>
<span id="t_tel" class="t" style="left:1253.4px;top:530.4px;font-size:15px;color:#686868;letter-spacing:-0.040px">Telefon (privat)</span>
<span id="t_adr" class="t" style="left:1582.5px;top:530.4px;font-size:15px;color:#686868;letter-spacing:-0.190px">Adresse (geschäftlich)</span>
<span id="t_geb" class="t" style="left:923.8px;top:623.2px;font-size:15px;color:#686868;letter-spacing:0.089px">Geburtstag</span>
<span id="t_kat" class="t" style="left:923.8px;top:691.4px;font-size:15px;color:#686868;letter-spacing:0.044px">Kategorien</span>
<span id="t_kathinzu" class="t" style="left:925.2px;top:715.6px;font-size:17px;color:#1c66ad;letter-spacing:0.316px">Kategorie hinzufügen</span>
<span id="t_notiz" class="t" style="left:923.8px;top:766.4px;font-size:15px;color:#757575;letter-spacing:0.400px">Notizen</span>
<span id="t_notizhinzu" class="t" style="left:923.8px;top:788.6px;font-size:17px;color:#1c66ad;letter-spacing:0.150px">Fügen Sie hier Ihre eigenen Notizen hinzu</span>
<span id="t_kbearb" class="t" style="left:1301.8px;top:874.5px;font-size:16.8px;-webkit-text-stroke:0.3px #3b3b3b;color:#3b3b3b;letter-spacing:0.717px">Kontakt bearbeiten</span>
<i class="m" style="left:139.5px;top:224.6px;width:66.0px;height:8.8px;background:#fafafa;"></i>
<i class="m" style="left:139.5px;top:224.6px;width:44.0px;height:8.8px;background:#f6f6f6;"></i>
<i class="m" style="left:205.5px;top:224.6px;width:30.0px;height:8.8px;background:#f7f7f7;"></i>
<i class="m" style="left:924.3px;top:545.0px;width:10.9px;height:10.8px;background:#f5f8fc;"></i>
<i class="m" style="left:924.3px;top:555.6px;width:10.9px;height:22.0px;background:#eaf1f9;"></i>
<i class="m" style="left:934.9px;top:545.0px;width:22.4px;height:10.8px;background:#f5f8fc;"></i>
<i class="m" style="left:934.9px;top:555.6px;width:22.4px;height:22.0px;background:#d8e6f4;"></i>
<i class="m" style="left:957.0px;top:545.0px;width:22.3px;height:10.8px;background:#f5f8fc;"></i>
<i class="m" style="left:957.0px;top:555.6px;width:22.3px;height:22.0px;background:#eaf2fa;"></i>
<i class="m" style="left:979.0px;top:545.0px;width:22.3px;height:10.8px;background:#f5f8fc;"></i>
<i class="m" style="left:979.0px;top:555.6px;width:22.3px;height:22.0px;background:#d3e3f3;"></i>
<i class="m" style="left:1001.0px;top:545.0px;width:22.3px;height:10.8px;background:#f5f8fc;"></i>
<i class="m" style="left:1001.0px;top:555.6px;width:22.3px;height:22.0px;background:#dae8f5;"></i>
<i class="m" style="left:1023.0px;top:545.0px;width:22.3px;height:10.8px;background:#f5f8fc;"></i>
<i class="m" style="left:1023.0px;top:555.6px;width:22.3px;height:22.0px;background:#dce9f6;"></i>
<i class="m" style="left:1045.0px;top:545.0px;width:22.3px;height:10.8px;background:#f5f8fc;"></i>
<i class="m" style="left:1045.0px;top:555.6px;width:22.3px;height:22.0px;background:#e2edf7;"></i>
<i class="m" style="left:1199.2px;top:545.0px;width:22.3px;height:10.8px;background:#f3f3f3;"></i>
<i class="m" style="left:1221.5px;top:545.0px;width:21.8px;height:10.8px;background:#e8e8e8;"></i>
<i class="m" style="left:1243.0px;top:545.0px;width:132.0px;height:10.8px;background:#f5f8fc;"></i>
<i class="m" style="left:1221.5px;top:555.6px;width:21.8px;height:22.0px;background:#f7f7f7;"></i>
<i class="m" style="left:1243.0px;top:555.6px;width:22.3px;height:22.0px;background:#e6eff8;"></i>
<i class="m" style="left:1265.0px;top:555.6px;width:22.3px;height:22.0px;background:#dde9f5;"></i>
<i class="m" style="left:1287.0px;top:555.6px;width:22.3px;height:22.0px;background:#e6eff8;"></i>
<i class="m" style="left:1309.0px;top:555.6px;width:22.3px;height:22.0px;background:#dce8f5;"></i>
<i class="m" style="left:1331.0px;top:555.6px;width:22.3px;height:22.0px;background:#d8e5f3;"></i>
<i class="m" style="left:1353.0px;top:555.6px;width:22.3px;height:22.0px;background:#e2ecf7;"></i>
<svg class="ic" style="left:1217.5px;top:540.5px" width="9" height="5.2" viewBox="0 0 9 5.2" ><path d="M0.8 4.6 C1 2 3 0.7 4.6 0.7 C6.4 0.7 8 2 8.2 4.6" fill="none" stroke="#616161" stroke-width="1.2"/></svg>
<i class="m" style="left:1529.0px;top:545.0px;width:198.0px;height:10.8px;background:#f8f8f8;"></i>
<i class="m" style="left:1529.0px;top:555.6px;width:22.3px;height:22.2px;background:#f6f6f6;"></i>
<i class="m" style="left:1551.0px;top:555.6px;width:22.3px;height:22.2px;background:#ececec;"></i>
<i class="m" style="left:1573.0px;top:555.6px;width:22.3px;height:22.2px;background:#f2f2f2;"></i>
<i class="m" style="left:1595.0px;top:555.6px;width:22.3px;height:22.2px;background:#e4e4e4;"></i>
<i class="m" style="left:1617.0px;top:555.6px;width:22.3px;height:22.2px;background:#e6e6e6;"></i>
<i class="m" style="left:1639.0px;top:555.6px;width:22.3px;height:22.2px;background:#e4e4e4;"></i>
<i class="m" style="left:1661.0px;top:555.6px;width:22.3px;height:22.2px;background:#e5e5e5;"></i>
<i class="m" style="left:1683.0px;top:555.6px;width:22.3px;height:22.2px;background:#e6e6e6;"></i>
<i class="m" style="left:1705.0px;top:555.6px;width:22.3px;height:22.2px;background:#e6e6e6;"></i>
<i class="m" style="left:1573.0px;top:577.6px;width:22.3px;height:22.0px;background:#efefef;"></i>
<i class="m" style="left:1595.0px;top:577.6px;width:22.3px;height:22.0px;background:#e2e2e2;"></i>
<i class="m" style="left:1617.0px;top:577.6px;width:22.3px;height:22.0px;background:#e0e0e0;"></i>
<i class="m" style="left:1639.0px;top:577.6px;width:22.3px;height:22.0px;background:#e1e1e1;"></i>
<i class="m" style="left:1661.0px;top:577.6px;width:22.3px;height:22.0px;background:#e1e1e1;"></i>
<i class="m" style="left:1683.0px;top:577.6px;width:22.3px;height:22.0px;background:#ececec;"></i>
<i class="m" style="left:1705.0px;top:577.6px;width:22.3px;height:22.0px;background:#e4e4e4;"></i>
<i class="m" style="left:1727.0px;top:577.6px;width:22.3px;height:22.0px;background:#ececec;"></i>
<i class="m" style="left:1749.0px;top:577.6px;width:22.3px;height:22.0px;background:#e3e3e3;"></i>
<i class="m" style="left:1771.0px;top:577.6px;width:22.3px;height:22.0px;background:#e3e3e3;"></i>
<i class="m" style="left:1793.0px;top:577.6px;width:22.3px;height:22.0px;background:#e3e3e3;"></i>
<i class="m" style="left:1815.0px;top:577.6px;width:22.3px;height:22.0px;background:#fafafa;"></i>
<i class="m" style="left:917.9px;top:643.0px;width:11.4px;height:12.8px;background:#f4f4f4;"></i>
<i class="m" style="left:917.9px;top:655.6px;width:11.4px;height:16.2px;background:#f6f6f6;"></i>
<i class="m" style="left:929.0px;top:643.0px;width:22.3px;height:12.8px;background:#e6e6e6;"></i>
<i class="m" style="left:929.0px;top:655.6px;width:22.3px;height:16.2px;background:#e9e9e9;"></i>
<i class="m" style="left:951.0px;top:643.0px;width:22.3px;height:12.8px;background:#ececec;"></i>
<i class="m" style="left:951.0px;top:655.6px;width:22.3px;height:16.2px;background:#efefef;"></i>
<i class="m" style="left:973.0px;top:643.0px;width:22.3px;height:12.8px;background:#e5e5e5;"></i>
<i class="m" style="left:973.0px;top:655.6px;width:22.3px;height:16.2px;background:#e8e8e8;"></i>
<i class="m" style="left:995.0px;top:643.0px;width:21.0px;height:28.8px;background:#fcfcfc;"></i>
</body></html>
